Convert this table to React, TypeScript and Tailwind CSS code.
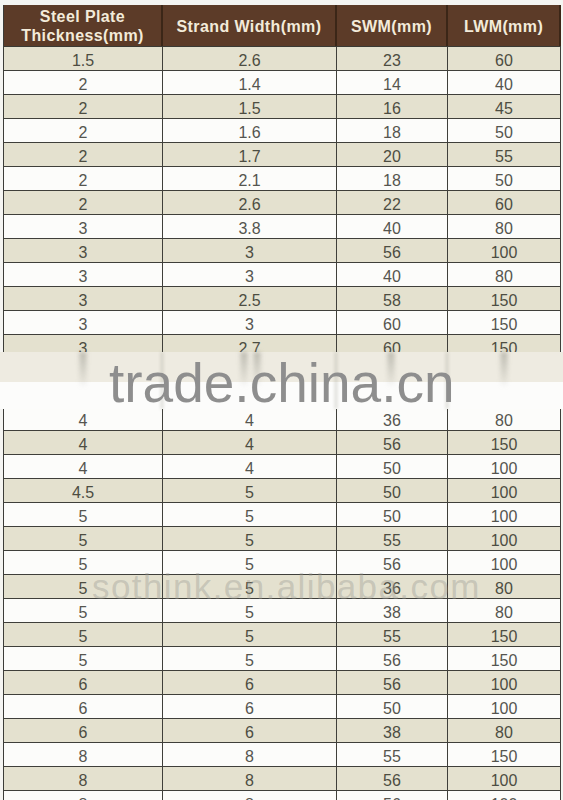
const ROWS: string[][] = [
  ["1.5", "2.6", "23", "60"],
  ["2", "1.4", "14", "40"],
  ["2", "1.5", "16", "45"],
  ["2", "1.6", "18", "50"],
  ["2", "1.7", "20", "55"],
  ["2", "2.1", "18", "50"],
  ["2", "2.6", "22", "60"],
  ["3", "3.8", "40", "80"],
  ["3", "3", "56", "100"],
  ["3", "3", "40", "80"],
  ["3", "2.5", "58", "150"],
  ["3", "3", "60", "150"],
  ["3", "2.7", "60", "150"],
  ["", "", "", ""],
  ["", "", "", ""],
  ["4", "4", "36", "80"],
  ["4", "4", "56", "150"],
  ["4", "4", "50", "100"],
  ["4.5", "5", "50", "100"],
  ["5", "5", "50", "100"],
  ["5", "5", "55", "100"],
  ["5", "5", "56", "100"],
  ["5", "5", "36", "80"],
  ["5", "5", "38", "80"],
  ["5", "5", "55", "150"],
  ["5", "5", "56", "150"],
  ["6", "6", "56", "100"],
  ["6", "6", "50", "100"],
  ["6", "6", "38", "80"],
  ["8", "8", "55", "150"],
  ["8", "8", "56", "100"],
  ["8", "8", "56", "100"],
];

const font = { fontFamily: '"Liberation Sans", Arial, sans-serif' };

function HeaderCell({ children }: { children: React.ReactNode }) {
  return (
    <div className="flex items-center justify-center border-r-2 border-[#3b2617] pt-[1px] text-center text-[16px] font-bold leading-[19px] tracking-[0.4px] text-[#f3ebda]">
      {children}
    </div>
  );
}

export default function App() {
  return (
    <div
      className="relative h-[800px] w-[563px] overflow-hidden bg-[#f5f5f2] pl-[3px] pt-[5px]"
      style={font}
    >
      <div className="w-[558px] border-l border-[#3c3c38]">
        {/* Header */}
        <div className="grid h-[42px] grid-cols-[159px_174px_111px_113px] border-b border-[#3a3a34] bg-[#5c3b28]">
          <HeaderCell>
            Steel Plate
            <br />
            Thickness(mm)
          </HeaderCell>
          <HeaderCell>Strand Width(mm)</HeaderCell>
          <HeaderCell>SWM(mm)</HeaderCell>
          <HeaderCell>LWM(mm)</HeaderCell>
        </div>

        {/* Rows */}
        {ROWS.map((row, i) => (
          <div
            key={i}
            className={`grid h-[24px] grid-cols-[159px_174px_111px_113px] border-b border-[#3f3f3a] ${
              i % 2 === 0 ? "bg-[#e4e1cf] text-[#4d4d42]" : "bg-[#fcfcfa] text-[#55554f]"
            }`}
          >
            {row.map((c, j) => (
              <div
                key={j}
                className="flex items-center justify-center border-r border-[#3f3f3a] pt-[4px] text-[16px] leading-none"
              >
                {c}
              </div>
            ))}
          </div>
        ))}
      </div>

      {/* trade.china.cn watermark band */}
      <div className="absolute left-0 top-[352px] h-[57px] w-full">
        <div className="h-[30px] bg-[#eeebe1]" />
        <div className="h-[27px] bg-[#fcfcfb]" />
        {[83, 244, 257, 391, 504].map((x) => (
          <div
            key={x}
            className="absolute top-0 h-[36px] w-[7px] -translate-x-1/2 bg-gradient-to-b from-[#8a8a80]/50 to-transparent blur-[2px]"
            style={{ left: x }}
          />
        ))}
        {[162, 336, 447].map((x) => (
          <div
            key={x}
            className="absolute top-0 h-full w-[3px] -translate-x-1/2 bg-[#8a8a80]/25 blur-[1.5px]"
            style={{ left: x }}
          />
        ))}
      </div>
      <div className="absolute left-[109px] top-[356px] text-[55px] leading-none text-[#8e8e8e]">
        trade.china.cn
      </div>

      {/* faint site watermark */}
      <div className="absolute left-[92px] top-[569px] text-[35px] leading-none tracking-[1.4px] text-[#9a9a94]/40">
        sothink.en.alibaba.com
      </div>
    </div>
  );
}
